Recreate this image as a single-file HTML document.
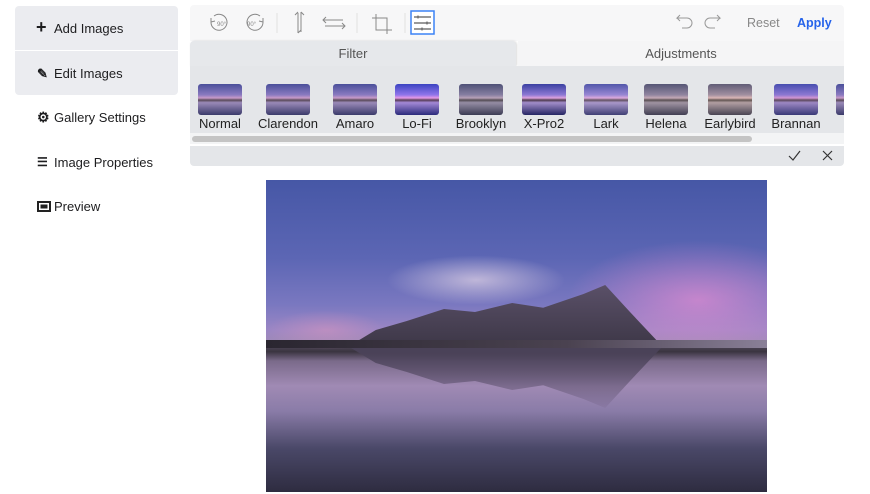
<!DOCTYPE html>
<html><head><style>
body{margin:0;width:870px;height:494px;background:#fff;font-family:"Liberation Sans",Arial,sans-serif;position:relative;overflow:hidden}
.side{position:absolute;left:15px;width:163px;height:44px;font-size:13px;color:#1d1d1f}
.side span{position:absolute;left:39px;top:15px}
.side i{position:absolute;left:22px;top:15px;font-style:normal;font-weight:bold}
.tb{position:absolute;left:190px;top:5px;width:654px;height:36px;background:#f7f7f8;border-radius:4px 4px 0 0}
.tab{position:absolute;top:41px;height:25px;font-size:13px;color:#555;text-align:center;line-height:25px}
.thumbs{position:absolute;left:190px;top:66px;width:654px;height:78px;background:#e4e6e9;overflow:hidden}
.th{position:absolute;top:18px;width:44px;height:31px;border-radius:3px;background:linear-gradient(#4a4f9a 0%,#8a7ac0 35%,#c89ac8 45%,#5a4a5a 52%,#9a8ab8 60%,#3a3a6a 100%)}
.lb{position:absolute;top:50px;font-size:13px;color:#222;width:80px;text-align:center}
</style></head><body>
<div class="side" style="top:6px;background:#ebecf0;border-radius:4px 4px 0 0"><i style="font-size:18px;top:11px;left:21px">+</i><span>Add Images</span></div>
<div class="side" style="top:51px;background:#ebecf0;border-radius:0 0 4px 4px"><i>✎</i><span>Edit Images</span></div>
<div class="side" style="top:95px"><i style="font-size:14px;top:14px">⚙</i><span>Gallery Settings</span></div>
<div class="side" style="top:140px"><i style="font-size:12px">☰</i><span>Image Properties</span></div>
<div class="side" style="top:184px"><i style="top:17px"><b style="display:block;width:10px;height:7px;border:2px solid #222;background:#222;box-shadow:inset 0 0 0 1.5px #fff"></b></i><span>Preview</span></div>

<div class="tb"></div>
<svg style="position:absolute;left:190px;top:5px" width="654" height="36" fill="none" stroke="#888" stroke-width="1">
<path d="M24 11 a8 8 0 1 1 -3 6" /><path d="M21 13 l0 4 4 -1"/><text x="27" y="21" font-size="6" fill="#888" stroke="none">90°</text>
<path d="M70 11 a8 8 0 1 0 3 6"/><path d="M73 13 l0 4 -4 -1"/><text x="57" y="21" font-size="6" fill="#888" stroke="none">90°</text>
<line x1="87" y1="8" x2="87" y2="28" stroke="#e0e0e0"/>
<path d="M108 8 v20 M111 7 v20 M105 10 l3 -3 M108 28 l3 -3 M114 10 l-3-3"/>
<path d="M133 15 h20 M135 21 h20 M136 12 l-3 3 3 3 M152 18 l3 3 -3 3"/>
<line x1="167" y1="8" x2="167" y2="28" stroke="#e0e0e0"/>
<path d="M186 9 v16 h16 M182 13 h15 v16"/>
<line x1="215" y1="8" x2="215" y2="28" stroke="#e0e0e0"/>
<rect x="221" y="6" width="23" height="23" stroke="#3b82f6" stroke-width="1.5" fill="#fff"/>
<path d="M224 12 h17 M224 18 h17 M224 24 h17" stroke="#333"/><circle cx="228" cy="12" r="1" fill="#333"/><circle cx="237" cy="18" r="1" fill="#333"/><circle cx="232" cy="24" r="1" fill="#333"/>
<path d="M497 13 h-10 l3 -3 M487 13 l3 3 M488 13 h9 a5 5 0 0 1 0 10 h-5" stroke="#999"/>
<path d="M520 13 h10 l-3 -3 M530 13 l-3 3 M529 13 h-9 a5 5 0 0 0 0 10 h5" stroke="#999"/>
<text x="557" y="22" font-size="12.5" fill="#888" stroke="none" font-family="Liberation Sans">Reset</text>
<text x="607" y="22" font-size="12.5" fill="#2563eb" stroke="none" font-weight="bold" font-family="Liberation Sans">Apply</text>
</svg>
<div class="tab" style="left:190px;width:326px;background:#e6e8eb;border-radius:4px 4px 0 0;box-shadow:1px 0 2px rgba(0,0,0,.15)">Filter</div>
<div class="tab" style="left:518px;width:326px;background:#f5f5f6">Adjustments</div>
<div class="thumbs">
<div class="th" style="left:8px"></div><div class="lb" style="left:-10px">Normal</div>
<div class="th" style="left:76px"></div><div class="lb" style="left:58px">Clarendon</div>
<div class="th" style="left:143px"></div><div class="lb" style="left:125px">Amaro</div>
<div class="th" style="left:205px;filter:saturate(1.4) contrast(1.2)"></div><div class="lb" style="left:187px">Lo-Fi</div>
<div class="th" style="left:269px;filter:saturate(.5)"></div><div class="lb" style="left:251px">Brooklyn</div>
<div class="th" style="left:332px;filter:contrast(1.3)"></div><div class="lb" style="left:314px">X-Pro2</div>
<div class="th" style="left:394px;filter:brightness(1.1)"></div><div class="lb" style="left:376px">Lark</div>
<div class="th" style="left:454px;filter:saturate(.6) sepia(.2)"></div><div class="lb" style="left:436px">Helena</div>
<div class="th" style="left:518px;filter:sepia(.5)"></div><div class="lb" style="left:500px">Earlybird</div>
<div class="th" style="left:584px;filter:saturate(1.3)"></div><div class="lb" style="left:566px">Brannan</div>
<div class="th" style="left:646px"></div>
<div style="position:absolute;left:0;top:67px;width:654px;height:11px;background:#f3f4f5"></div>
<div style="position:absolute;left:2px;top:70px;width:560px;height:6px;border-radius:3px;background:#c4c4c4"></div>
</div>
<div style="position:absolute;left:190px;top:146px;width:654px;height:20px;background:#e4e6e9;border-radius:0 0 4px 4px"></div>
<svg style="position:absolute;left:786px;top:148px" width="50" height="16" fill="none" stroke="#333" stroke-width="1.2"><path d="M3 8 l4 4 7-9"/><path d="M37 3 l9 9 M46 3 l-9 9"/></svg>
<div style="position:absolute;left:266px;top:180px;width:501px;height:312px;overflow:hidden;background:linear-gradient(180deg,#4657a6 0%,#5c66b4 25%,#7a78c0 40%,#9a86c4 48%,#a08ab8 52%,#50485a 53%,#3a3440 55%,#7a6a8a 58%,#a08ab4 66%,#8a7ca8 74%,#4a4868 86%,#2e2c40 100%)">
<div style="position:absolute;left:300px;top:60px;width:220px;height:100px;background:radial-gradient(ellipse at 60% 60%,rgba(230,140,210,.7),rgba(230,140,210,0) 70%)"></div>
<div style="position:absolute;left:0;top:130px;width:120px;height:40px;background:radial-gradient(ellipse,rgba(220,150,190,.5),rgba(0,0,0,0) 70%)"></div>
<div style="position:absolute;left:85px;top:105px;width:310px;height:60px;background:linear-gradient(#5a5068,#3e3848);clip-path:polygon(0 100%,8% 75%,18% 60%,30% 40%,40% 45%,52% 30%,62% 38%,75% 15%,82% 0,90% 45%,100% 100%)"></div>
<div style="position:absolute;left:120px;top:75px;width:180px;height:50px;border-radius:50%;background:radial-gradient(rgba(200,190,220,.9),rgba(160,150,200,0) 70%)"></div>
<div style="position:absolute;left:85px;top:168px;width:310px;height:60px;background:linear-gradient(#4a4258,rgba(120,100,140,.2));clip-path:polygon(0 0,8% 25%,18% 40%,30% 60%,40% 55%,52% 70%,62% 62%,75% 85%,82% 100%,90% 55%,100% 0)"></div>
<div style="position:absolute;left:0;top:160px;width:501px;height:8px;background:linear-gradient(90deg,#2a2630,#4a4250 60%,#8a8098)"></div>
</div>
</body></html>
